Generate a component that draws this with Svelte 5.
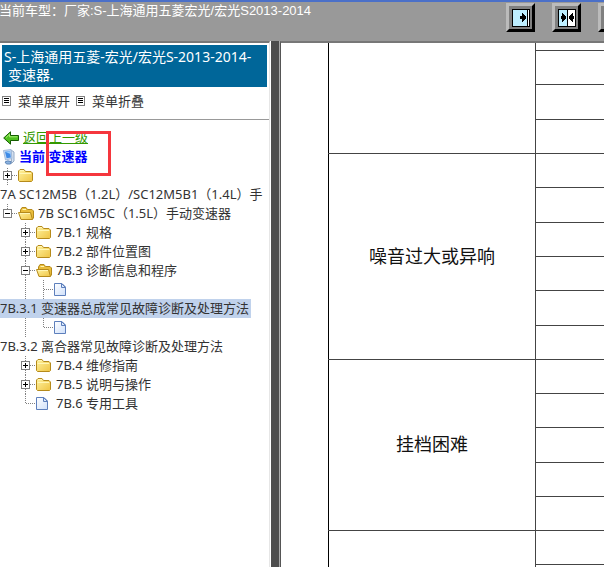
<script>
  const tree = [
    { depth: 0, join: 'plus', icon: 'folder', label: '7A SC12M5B（1.2L）/SC12M5B1（1.4L）手', wrap: true, first: true },
    { depth: 0, join: 'minus', icon: 'open', label: '7B SC16M5C（1.5L）手动变速器', last: true },
    { depth: 1, join: 'plus', icon: 'folder', label: '7B.1 规格' },
    { depth: 1, join: 'plus', icon: 'folder', label: '7B.2 部件位置图' },
    { depth: 1, join: 'minus', icon: 'open', label: '7B.3 诊断信息和程序' },
    { depth: 2, join: 'leaf', icon: 'page', label: '7B.3.1 变速器总成常见故障诊断及处理方法', wrap: true, selected: true },
    { depth: 2, join: 'leaf', icon: 'page', label: '7B.3.2 离合器常见故障诊断及处理方法', wrap: true, last: true },
    { depth: 1, join: 'plus', icon: 'folder', label: '7B.4 维修指南' },
    { depth: 1, join: 'plus', icon: 'folder', label: '7B.5 说明与操作' },
    { depth: 1, join: 'leaf', icon: 'page', label: '7B.6 专用工具', last: true }
  ];
  const groups = [
    { name: '', rows: 4, size: 'head' },
    { name: '噪音过大或异响', rows: 6, size: 'large' },
    { name: '挂档困难', rows: 5, size: 'medium' },
    { name: '', rows: 2, size: 'tail' }
  ];
  const tools = ['expand', 'split', 'collapse'];
  const toolNames = { expand: '展开左栏', split: '还原', collapse: '收起左栏' };
</script>

{#snippet join(kind, first, last)}
  <svg class="cell" viewBox="0 0 18 19" aria-hidden="true">
    {#if kind !== 'none'}
      <path class="dots" d={first ? 'M7.5 2V19' : last ? 'M7.5 0V10' : 'M7.5 0V19'} />
    {/if}
    {#if kind === 'plus' || kind === 'minus' || kind === 'leaf'}
      <path class="dots" d="M8 9.5H18" />
    {/if}
    {#if kind === 'plus' || kind === 'minus'}
      <rect x="3.5" y="5.5" width="8" height="8" fill="#fff" stroke="#808080" />
      <path d={kind === 'plus' ? 'M5 9.5H10M7.5 7V12' : 'M5 9.5H10'} stroke="#000" />
    {/if}
  </svg>
{/snippet}

{#snippet picture(kind)}
  <svg class="cell" viewBox="0 0 18 19" aria-hidden="true">
    {#if kind === 'folder'}
      <path d="M.5 14.5V5L2 3.5H6L7.5 5.5H13L14.5 7V14.5L13.5 15.5H1.5Z" fill="url(#gold)" stroke="#b58a1b" />
      <path d="M1.5 7.5H13M2 4.5H6" stroke="#fff6b5" fill="none" />
    {:else if kind === 'open'}
      <path d="M2.5 14V6L4 3.5H8L9.5 5.5H14L15.5 7V14L14 15.5H4Z" fill="#e9bd3c" stroke="#b58a1b" />
      <path d="M.5 8.5H12.5L14.5 15.5H3Z" fill="url(#gold)" stroke="#b58a1b" />
      <path d="M2 9.5H12M4.5 5.5H8" stroke="#fff6b5" />
    {:else}
      <path d="M.5 3.5H8L11.5 7V15.5H.5Z" fill="url(#paper)" stroke="#5d7fbc" />
      <path d="M7.5 3.5V7.5H11.5Z" fill="#dbe9fb" stroke="#5d7fbc" />
    {/if}
  </svg>
{/snippet}

{#snippet listIcon()}
  <svg width="9" height="10" viewBox="0 0 9 10" aria-hidden="true">
    <rect x=".5" y=".5" width="8" height="9" fill="#fff" stroke="#808080" />
    <path d="M2 2.5H7M2 4.5H7M2 6.5H7" stroke="#000" />
  </svg>
{/snippet}

<svg class="defs" aria-hidden="true">
  <defs>
    <linearGradient id="gold" x1="0" y1="0" x2="1" y2="1">
      <stop offset="0" stop-color="#fff3a0" /><stop offset="1" stop-color="#efc443" />
    </linearGradient>
    <linearGradient id="paper" x1="0" y1="0" x2="1" y2="1">
      <stop offset="0" stop-color="#fff" /><stop offset="1" stop-color="#cfe0fa" />
    </linearGradient>
  </defs>
</svg>

<div class="page">
  <header>
    <span class="model">当前车型：厂家:S-上海通用五菱宏光/宏光S2013-2014</span>
    <div class="tools">
      {#each tools as tool}
        <button aria-label={toolNames[tool]}>
          <svg width="18" height="18" viewBox="0 0 18 18" aria-hidden="true">
            <rect x=".5" y=".5" width="17" height="17" fill="#fff" stroke="#000" />
            {#if tool === 'expand'}
              <path d="M1 1H15V17H1Z" fill="#bdeeff" />
              <path d="M15.5 1V17" stroke="#000" />
              <path d="M8 7H10V4H11V5H12V6H13V7H14V10H13V11H12V12H11V13H10V10H8Z" />
            {:else if tool === 'split'}
              <path d="M1 1H9V17H1Z" fill="#bdeeff" />
              <path d="M9.5 1V17" stroke="#000" />
              <path d="M3 7H4V4H5V5H6V6H7V7H8V10H7V11H6V12H5V13H4V10H3Z" />
              <path d="M16 7H15V4H14V5H13V6H12V7H11V10H12V11H13V12H14V13H15V10H16Z" />
            {:else}
              <path d="M1 1H3V17H1Z" fill="#bdeeff" />
              <path d="M3.5 1V17" stroke="#000" />
              <path d="M11 7H9V4H8V5H7V6H6V7H5V10H6V11H7V12H8V13H9V10H11Z" />
            {/if}
          </svg>
        </button>
      {/each}
    </div>
  </header>

  <div class="body">
    <nav>
      <h1>S-上海通用五菱-宏光/宏光S-2013-2014- <span>变速器.</span></h1>
      <div class="menu">
        <button>{@render listIcon()}菜单展开</button>
        <button>{@render listIcon()}菜单折叠</button>
      </div>
      <div class="outline">
        <div class="line back">
          <svg width="16" height="14" viewBox="0 0 16 14" aria-hidden="true">
            <path d="M.7 7L7.5 .8V4.5H15.5V9.5H7.5V13.2Z" fill="#4fc01f" stroke="#145c00" />
            <path d="M3 6.6L6.5 3.2V5.8H14.5" fill="none" stroke="#a6ee72" />
          </svg>
          <a href="#back">返回上一级</a>
        </div>
        <div class="line current">
          <svg width="14" height="16" viewBox="0 0 14 16" aria-hidden="true">
            <path d="M9 1L12 3V12L9.5 14.5Z" fill="#d7e2ef" stroke="#93a9c5" />
            <path d="M1.5 1.5L9 .5L10 9.5L3.5 11Z" fill="#c4daf4" stroke="#a3bad8" />
            <path d="M3 2.7L8 2L8.8 8.4L4.6 9.3Z" fill="#3e8be6" />
            <path d="M3.2 2.8L8 2.2L8.4 5Z" fill="#9fd0ff" />
            <path d="M3 13Q5.5 11 9 12.5L8.5 15H4.5Z" fill="#8db3e0" stroke="#5d86b8" />
          </svg>
          <strong>当前 变速器</strong>
        </div>
        {#each tree as node}
          <div class="line">
            {#if node.depth === 1}{@render join('none')}{/if}
            {#if node.depth === 2}{@render join('none')}{@render join('line')}{/if}
            {@render join(node.join, node.first, node.last)}
            {@render picture(node.icon)}
            {#if !node.wrap}<a class="node" href="#node">{node.label}</a>{/if}
          </div>
          {#if node.wrap}
            <div class="line">
              <a class="wrapped" class:selected={node.selected} href="#node">{node.label}</a>
            </div>
          {/if}
        {/each}
        <div class="mark"></div>
      </div>
    </nav>

    <div class="splitter"></div>

    <main>
      <table>
        <tbody>
          {#each groups as group}
            {#each Array(group.rows) as _, i}
              <tr class:stub={group.size === 'head' && i === 0}>
                {#if i === 0}<th class={group.size} rowspan={group.rows} scope="rowgroup">{group.name}</th>{/if}
                <td></td>
              </tr>
            {/each}
          {/each}
        </tbody>
      </table>
    </main>
  </div>
</div>

<style>
  :global(body) { margin: 0; }
  .page {
    display: flex;
    flex-direction: column;
    height: 100vh;
    overflow: hidden;
    font: 13px/19px "Noto Sans", "Noto Sans CJK SC", sans-serif;
    color: #333;
    background: #fff;
  }
  .defs { position: absolute; width: 0; height: 0; }
  header {
    display: flex;
    justify-content: space-between;
    flex: none;
    box-sizing: border-box;
    height: 41px;
    border-top: 2px solid #4b70c8;
    background: #999;
    color: #fff;
    font-family: "Liberation Sans", "Noto Sans CJK SC", sans-serif;
    line-height: 17px;
    overflow: hidden;
  }
  .model { margin-left: -1px; white-space: nowrap; }
  .tools { display: flex; gap: 17px; width: 98px; padding-top: 1px; }
  .tools button {
    display: flex;
    flex: none;
    align-items: center;
    justify-content: center;
    box-sizing: border-box;
    width: 29px;
    height: 29px;
    padding: 0;
    border: 3px solid;
    border-color: #bbb #000 #000 #bbb;
    background: #808080;
  }
  .body { display: flex; flex: 1; min-height: 0; }
  nav {
    flex: none;
    box-sizing: border-box;
    width: 270px;
    border-top: 2px solid #777;
    border-right: 1px solid #e6e6e6;
    overflow: hidden;
  }
  h1 {
    margin: 2px 2px 0;
    padding: 3px 2px;
    background: #069;
    color: #fff;
    font-size: 14px;
    font-weight: 400;
    line-height: 18px;
    white-space: nowrap;
  }
  h1 span { display: block; padding-left: 4px; }
  .menu {
    display: flex;
    gap: 6px;
    height: 32px;
    padding-left: 2px;
    border-bottom: 1px solid #999;
  }
  .menu button {
    display: flex;
    align-items: center;
    gap: 7px;
    height: 28px;
    padding: 0;
    border: 0;
    background: none;
    color: inherit;
    font: inherit;
  }
  .outline { position: relative; padding-top: 8px; }
  .line { display: flex; align-items: center; height: 19px; white-space: nowrap; }
  .cell { flex: none; width: 18px; height: 19px; }
  .dots { stroke: #808080; stroke-dasharray: 1 1; fill: none; }
  .line a { color: inherit; text-decoration: none; }
  .line a.node { padding-left: 2px; }
  .line a.selected { padding-right: 2px; background: #c0d2ec; }
  .back { gap: 4px; padding-left: 3px; }
  .line.back a { color: #390; text-decoration: underline; }
  .current { gap: 3px; padding-left: 2px; color: #00f; }
  .mark {
    position: absolute;
    top: 11px;
    left: 46px;
    box-sizing: border-box;
    width: 65px;
    height: 45px;
    border: 3px solid #f5363d;
  }
  .splitter {
    flex: none;
    width: 8px;
    margin-left: 1px;
    background: #4d4d4d;
    border-right: 1px solid #aaa;
  }
  main {
    flex: 1;
    min-width: 0;
    border-top: 2px solid #777;
    border-left: 1px solid #555;
    padding-left: 47px;
    overflow: hidden;
  }
  table { width: 100%; border-collapse: collapse; table-layout: fixed; }
  th, td { padding: 0; border: 1px solid #444; }
  th {
    width: 206px;
    border-left-color: #000;
    color: #111;
    font: 18px/24px "Liberation Sans", "Noto Sans CJK SC", sans-serif;
  }
  tr { height: 34px; }
  tr.stub { height: 7px; }
  tr:first-child th, tr:first-child td { border-top: 0; }
  td { border-right: 0; }
  .head { height: 110px; }
  .large { height: 205px; }
  .medium { height: 170px; }
</style>
